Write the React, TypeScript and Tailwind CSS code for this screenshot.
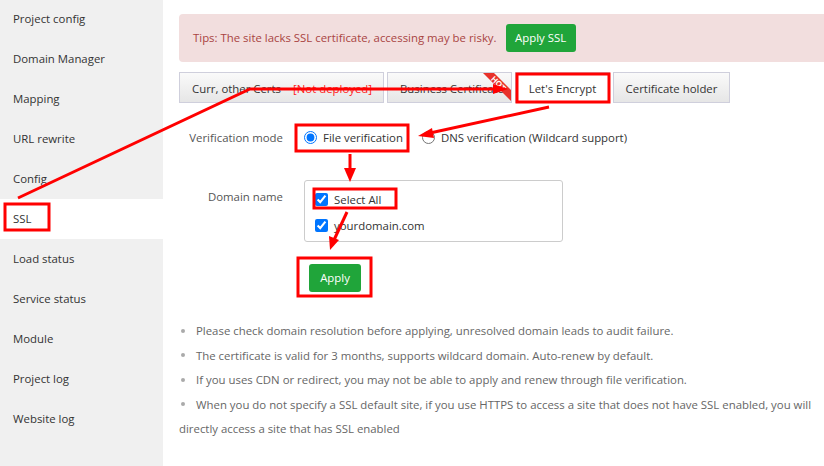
import React from "react";

const navItems = [
  "Project config",
  "Domain Manager",
  "Mapping",
  "URL rewrite",
  "Config",
  "SSL",
  "Load status",
  "Service status",
  "Module",
  "Project log",
  "Website log",
];

const notes = [
  "Please check domain resolution before applying, unresolved domain leads to audit failure.",
  "The certificate is valid for 3 months, supports wildcard domain. Auto-renew by default.",
  "If you uses CDN or redirect, you may not be able to apply and renew through file verification.",
  "When you do not specify a SSL default site, if you use HTTPS to access a site that does not have SSL enabled, you will directly access a site that has SSL enabled",
];

export default function App() {
  return (
    <div
      className="relative w-[824px] h-[466px] overflow-hidden bg-white flex text-[11.4px]"
      style={{ fontFamily: '"Open Sans", "Liberation Sans", sans-serif' }}
    >
      {/* Sidebar */}
      <div className="w-[163px] shrink-0 bg-[#f0f0f0] h-full flex flex-col">
        <div className="-mt-px flex flex-col">
          {navItems.map((n) => (
            <div
              key={n}
              className={`h-10 shrink-0 flex items-center pl-[13px] text-[#333] ${
                n === "SSL" ? "bg-white" : ""
              }`}
            >
              {n}
            </div>
          ))}
        </div>
      </div>

      {/* Main */}
      <div className="flex-1 pl-4 pt-[14px] min-w-0">
        <div className="w-[700px] h-12 rounded bg-[#f2dede] flex items-center pl-[14px]">
          <span className="text-[#a94442]">
            Tips: The site lacks SSL certificate, accessing may be risky.
          </span>
          <button className="ml-[9px] h-7 w-[70px] rounded-[3px] bg-[#20a53a] text-white">
            Apply SSL
          </button>
        </div>

        {/* Tabs */}
        <div className="mt-[10px] flex gap-[3px] h-[31px]">
          <div className="w-[205px] h-full border border-[#cfcfdc] bg-gradient-to-b from-[#fafafa] to-[#e6e6e6] flex items-center pt-[3px] pl-[12px] text-[#333] whitespace-nowrap">
            Curr, other Certs<span className="ml-[12px] text-[#ff1a1a]">[Not deployed]</span>
          </div>
          <div className="relative w-[125px] h-full border border-[#cfcfdc] bg-gradient-to-b from-[#fafafa] to-[#e6e6e6] flex items-center pt-[3px] pl-[12px] text-[#333] whitespace-nowrap overflow-hidden">
            Business Certificate
            <svg className="absolute right-0 top-0" width="28" height="28" viewBox="0 0 28 28">
              <polygon points="0,0 11,0 28,17 28,28" fill="#e8322b" />
              <text
                x="15"
                y="13"
                fill="white"
                fontSize="8"
                fontWeight="bold"
                textAnchor="middle"
                transform="rotate(45 15 11)"
                fontFamily="Liberation Sans, sans-serif"
              >
                HOT
              </text>
            </svg>
          </div>
          <div className="w-[95px] h-full border border-[#cfcfdc] bg-white flex items-center justify-center pt-[3px] text-[#333]">
            Let's Encrypt
          </div>
          <div className="w-[117px] h-full border border-[#cfcfdc] bg-gradient-to-b from-[#fafafa] to-[#e6e6e6] flex items-center justify-center pt-[3px] text-[#333]">
            Certificate holder
          </div>
        </div>

        {/* Verification mode */}
        <div className="mt-[22px] flex items-center h-6 pt-px">
          <div className="w-[104px] text-right text-[#555]">Verification mode</div>
          <label className="ml-[21px] flex items-center text-[#333]">
            <input type="radio" name="vm" defaultChecked className="m-0 w-[13px] h-[13px]" />
            <span className="ml-[6px]">File verification</span>
          </label>
          <label className="ml-[19px] flex items-center text-[#333]">
            <input type="radio" name="vm" className="m-0 w-[13px] h-[13px]" />
            <span className="ml-[6px]">DNS verification (Wildcard support)</span>
          </label>
        </div>

        {/* Domain name */}
        <div className="mt-[31px] flex items-start">
          <div className="w-[104px] text-right text-[#555] pt-[8px]">Domain name</div>
          <div className="ml-[21px] w-[259px] h-[62px] border border-[#ccc] rounded-[3px] pl-[10px] pt-[10px] flex flex-col gap-[9px]">
            <label className="flex items-center text-[#333] h-[17px]">
              <input type="checkbox" defaultChecked className="m-0 w-[13px] h-[13px]" />
              <span className="ml-[6px]">Select All</span>
            </label>
            <label className="flex items-center text-[#333] h-[17px]">
              <input type="checkbox" defaultChecked className="m-0 w-[13px] h-[13px]" />
              <span className="ml-[6px]">yourdomain.com</span>
            </label>
          </div>
        </div>

        <button className="mt-[22px] ml-[130px] h-7 w-[52px] rounded-[3px] bg-[#20a53a] text-white">
          Apply
        </button>

        {/* Notes */}
        <ul className="mt-[27px] w-[645px] text-[#666] leading-[24.5px]">
          {notes.map((t) => (
            <li key={t}>
              <span className="inline-block w-[17px] pl-[2px] align-middle">
                <span className="block w-1 h-1 rounded-full bg-[#aaa] mb-[2px]" />
              </span>
              {t}
            </li>
          ))}
        </ul>
      </div>

      {/* Annotation overlay */}
      <svg
        className="absolute inset-0 pointer-events-none"
        width="824"
        height="466"
        viewBox="0 0 824 466"
      >
        <g fill="none" stroke="#ff0000" strokeWidth="3">
          <rect x="5" y="204" width="44" height="26" />
          <rect x="517" y="74" width="92" height="28" />
          <rect x="296" y="125" width="112" height="26" />
          <rect x="314" y="189" width="82" height="19" />
          <rect x="298" y="258" width="73" height="38" />
          <polyline points="18,198 250,89 496,89" />
          <line x1="549" y1="107" x2="430" y2="133" />
          <line x1="350" y1="154" x2="350" y2="170" />
          <line x1="347" y1="212" x2="334" y2="240" />
        </g>
        <g fill="#ff0000">
          <polygon points="508,89 493,84 493,94" />
          <polygon points="418,136 432,128 434,138" />
          <polygon points="350,182 344,168 356,168" />
          <polygon points="330,250 329,236 339,240" />
        </g>
      </svg>
    </div>
  );
}
